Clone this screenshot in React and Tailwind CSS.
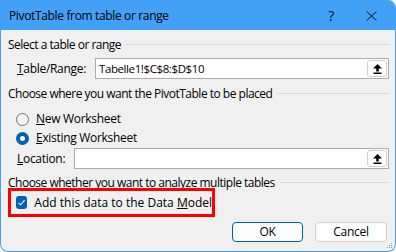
import React from "react";

function Header({ children }) {
  return (
    <div className="flex items-center h-[14px] gap-[5px]">
      <span className="whitespace-nowrap tracking-[-0.5px]">{children}</span>
      <div className="flex-1 h-px bg-[#d9d9d9] -mt-[2px]" />
    </div>
  );
}

function CollapseBtn() {
  return (
    <div className="w-[20px] h-[17px] mr-px bg-white border border-[#cfcfcf] rounded-[3px] flex items-center justify-center">
      <svg width="9" height="10" viewBox="0 0 9 10">
        <path d="M4.5 0 L0 4.5 L9 4.5 Z" fill="#000" />
        <rect x="3.25" y="4" width="2.5" height="3.5" fill="#000" />
        <rect x="0.5" y="8.5" width="8" height="1.5" fill="#000" />
      </svg>
    </div>
  );
}

function Input({ value }) {
  return (
    <div className="flex-1 h-[21px] bg-white border border-[#acacac] flex items-center justify-between pl-[3px]">
      <span className="whitespace-nowrap text-[11.5px] tracking-[-0.4px]">{value}</span>
      <CollapseBtn />
    </div>
  );
}

export default function App() {
  return (
    <div className="w-[396px] h-[252px] bg-white">
      <div className="relative w-full h-full flex flex-col overflow-hidden rounded-tr-[8px] rounded-b-[8px] border border-t-0 border-[#42a0f6] bg-[#f0f0f0] text-black text-[12px] leading-[14px] font-['Open_Sans',sans-serif] tracking-[-0.3px]">
        <div className="h-[30px] shrink-0 bg-[#42a0f6] flex items-center pl-[8px] pt-px">
          <span className="flex-1 whitespace-nowrap tracking-[-0.35px]">PivotTable from table or range</span>
          <span className="text-[14px] mr-[32px] text-[#111]">?</span>
          <svg width="11" height="10" viewBox="0 0 11 10" className="mr-[18px]">
            <path d="M0.5 0.5 L10.5 9.5 M10.5 0.5 L0.5 9.5" stroke="#111" strokeWidth="1" />
          </svg>
        </div>
        <div className="flex-1 flex flex-col pl-[7px] pr-[6px] pt-[8px]">
          <Header>Select a table or range</Header>
          <div className="flex items-center h-[21px] mt-[6px]">
            <div className="w-[87px] pl-[9px] whitespace-nowrap">
              <span className="underline">T</span>able/Range:
            </div>
            <Input value="Tabelle1!$C$8:$D$10" />
          </div>
          <div className="mt-[8px]">
            <Header>Choose where you want the PivotTable to be placed</Header>
          </div>
          <div className="flex items-center h-[14px] mt-[11px] pl-[8px] gap-[7px]">
            <div className="w-[13px] h-[13px] rounded-full border border-[#6e6e6e] bg-[#f5f5f5]" />
            <span><span className="underline">N</span>ew Worksheet</span>
          </div>
          <div className="flex items-center h-[14px] mt-[5px] pl-[8px] gap-[7px]">
            <div className="w-[13px] h-[13px] rounded-full bg-[#005fb8] flex items-center justify-center">
              <div className="w-[5px] h-[5px] rounded-full bg-white" />
            </div>
            <span><span className="underline">E</span>xisting Worksheet</span>
          </div>
          <div className="flex items-center h-[21px] mt-[3px]">
            <div className="w-[66px] pl-[9px] whitespace-nowrap">
              <span className="underline">L</span>ocation:
            </div>
            <Input value="" />
          </div>
          <div className="mt-[7px]">
            <Header>Choose whether you want to analyze multiple tables</Header>
          </div>
          <div className="w-[207px] h-[29px] -mt-[2px] border-[3px] border-[#ff0000] flex items-center pl-[5px] gap-[7px]">
            <div className="w-[13px] h-[13px] rounded-[3px] bg-[#005fb8] flex items-center justify-center">
              <svg width="9" height="9" viewBox="0 0 9 9">
                <path d="M1.5 4.8 L3.6 6.8 L7.6 2.2" stroke="#fff" strokeWidth="1.1" fill="none" />
              </svg>
            </div>
            <span className="whitespace-nowrap tracking-[0px]">
              Add this data to the Data <span className="underline">M</span>odel
            </span>
          </div>
          <div className="flex justify-end gap-[12px] mt-[5px] pr-[2px]">
            <div className="w-[71px] h-[20px] rounded-[4px] border border-[#005fb8] bg-[#fdfdfd] flex items-center justify-center">OK</div>
            <div className="w-[72px] h-[20px] rounded-[4px] border border-[#d0d0d0] bg-[#fdfdfd] flex items-center justify-center">Cancel</div>
          </div>
        </div>
        <svg width="7" height="7" viewBox="0 0 7 7" className="absolute right-[2px] bottom-[2px]">
          <rect x="5" y="1" width="1" height="1" fill="#9a9a9a" />
          <rect x="3" y="3" width="1" height="1" fill="#9a9a9a" />
          <rect x="5" y="3" width="1" height="1" fill="#9a9a9a" />
          <rect x="1" y="5" width="1" height="1" fill="#9a9a9a" />
          <rect x="3" y="5" width="1" height="1" fill="#9a9a9a" />
          <rect x="5" y="5" width="1" height="1" fill="#9a9a9a" />
        </svg>
      </div>
    </div>
  );
}
